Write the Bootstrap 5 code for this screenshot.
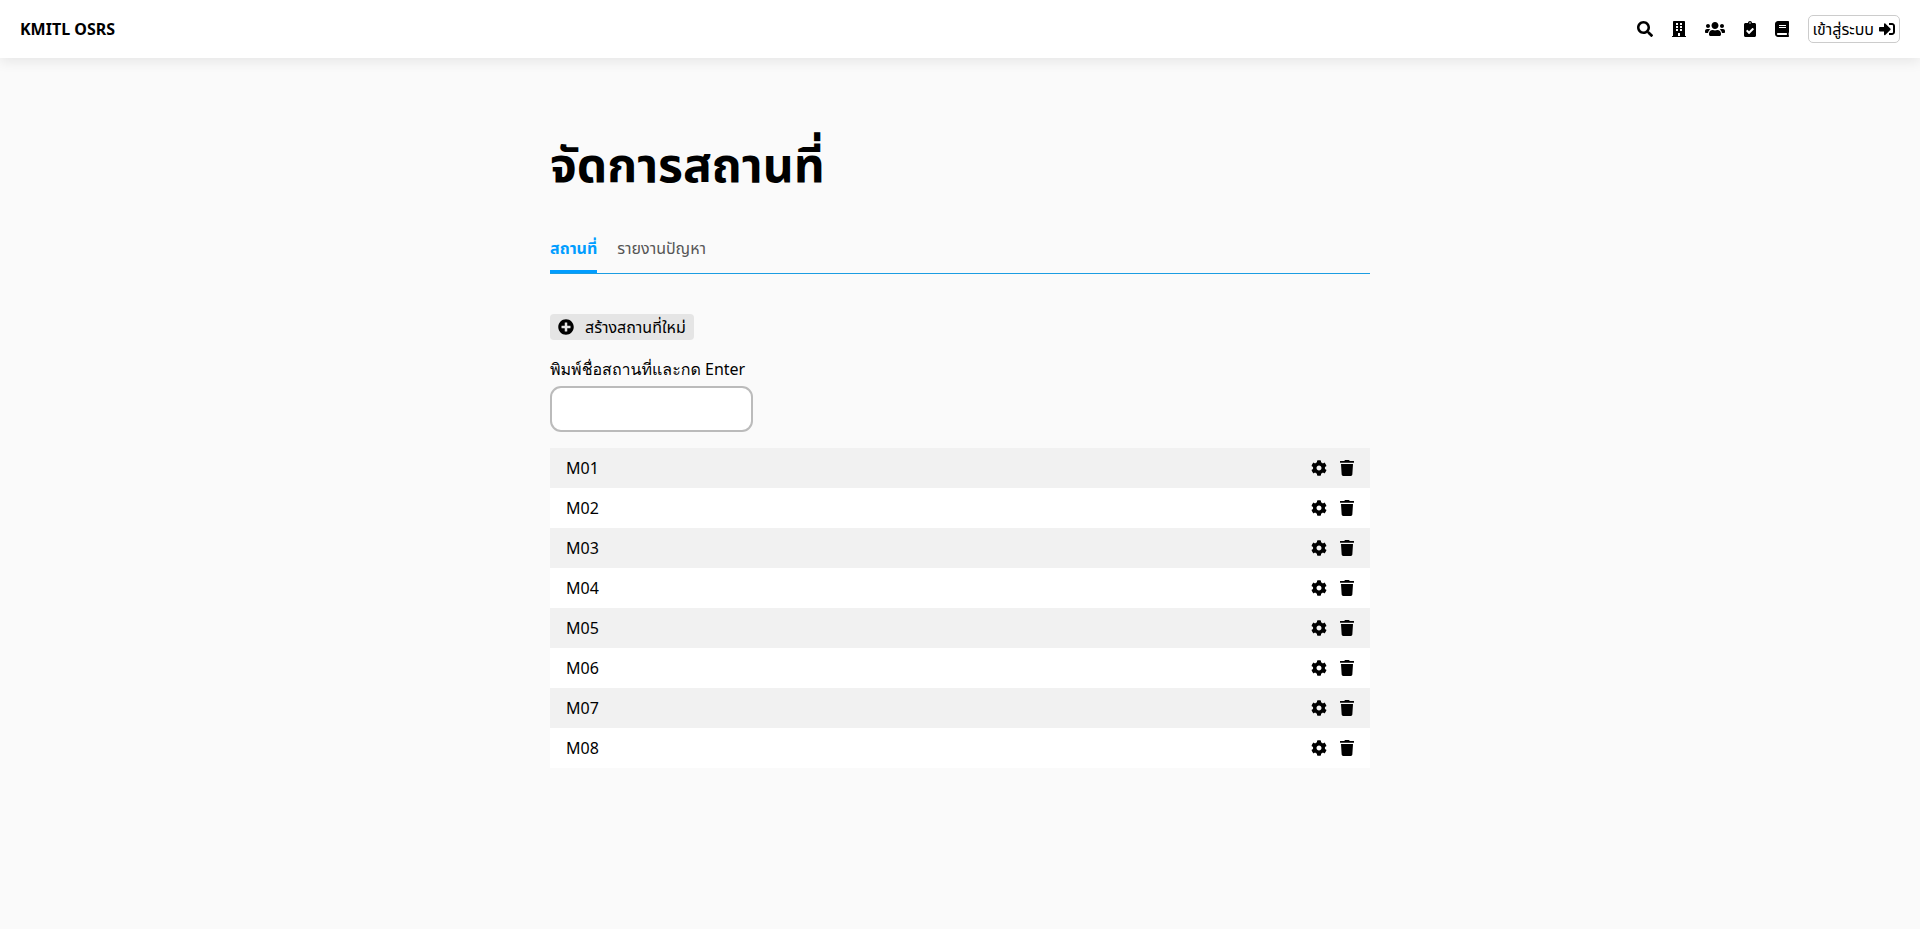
<!DOCTYPE html>
<html lang="th">
<head>
<meta charset="utf-8">
<meta name="viewport" content="width=device-width, initial-scale=1">
<title>KMITL OSRS</title>
<link href="https://cdn.jsdelivr.net/npm/bootstrap@5.3.0/dist/css/bootstrap.min.css" rel="stylesheet">
<style>
  body { background: #fafafa; color: #000; font-family: "Noto Sans", "Noto Sans Thai", "Noto Sans Thai UI", sans-serif; line-height: 24px; }
  .icon { height: 16px; fill: currentColor; display: block; }
  .site-bar { background: #fff; height: 58px; padding: 0 20px; box-shadow: 0 4px 12px rgba(0, 0, 0, .08); }
  .site-bar a { color: #000; }
  .icon-links { gap: 19px; }
  .login { height: 28px; padding: 0 4px; border: 1px solid #ccc; border-radius: 5px; background: #fff; gap: 5px; color: #000; }
  .page { max-width: 820px; padding-top: 70px; }
  .page-title { font-size: 48px; line-height: 72px; margin-bottom: 36px; }
  .tabs { border-bottom: 1px solid #1b9de2; gap: 20px; margin-bottom: 40px; }
  .tabs a { color: #555; padding-bottom: 10px; border-bottom: 3px solid transparent; }
  .tabs a.active { color: #009dff; font-weight: 700; border-bottom-color: #009dff; }
  .create { height: 26px; background: #e5e5e5; border: 0; border-radius: 4px; padding: 0 8px; gap: 11px; color: #000; }
  .place-label { font-family: "Noto Sans", Loma, sans-serif; margin: 17px 0 4px; }
  .thai { font-family: Loma, sans-serif; }
  .place-name { width: 203px; height: 46px; border: 2px solid #bbb; border-radius: 11px; background: #fff; padding: 0 12px; }
  .places li { height: 40px; padding: 0 16px; background: #fff; }
  .places li:nth-child(odd) { background: #f1f1f1; }
  .actions { gap: 13px; }
  .plain { border: 0; background: none; padding: 0; color: #000; }
</style>
</head>
<body>
<svg class="d-none" aria-hidden="true">
  <symbol id="i-gear" viewBox="0 0 512 512"><path d="M487.400 315.700l-42.600-24.600c4.300-23.200 4.300-47 0-70.200l42.600-24.600c4.900-2.800 7.100-8.600 5.500-14-11.100-35.600-30-67.800-54.700-94.600-3.800-4.100-10-5.100-14.800-2.300L380.800 110c-17.900-15.400-38.500-27.300-60.800-35.100V25.800c0-5.600-3.900-10.500-9.400-11.700-36.700-8.200-74.300-7.800-109.200 0-5.500 1.200-9.400 6.100-9.400 11.700V75c-22.200 7.900-42.800 19.800-60.800 35.100L88.700 85.500c-4.900-2.800-11-1.900-14.800 2.300-24.700 26.700-43.600 58.900-54.700 94.600-1.700 5.400.6 11.200 5.500 14L67.300 221c-4.300 23.200-4.300 47 0 70.200l-42.600 24.600c-4.900 2.800-7.100 8.600-5.500 14 11.100 35.600 30 67.800 54.700 94.600 3.800 4.100 10 5.100 14.800 2.300l42.600-24.600c17.900 15.400 38.500 27.300 60.800 35.100v49.200c0 5.600 3.900 10.500 9.400 11.700 36.700 8.200 74.300 7.800 109.200 0 5.500-1.200 9.400-6.100 9.400-11.700v-49.200c22.200-7.900 42.800-19.800 60.800-35.100l42.600 24.600c4.900 2.800 11 1.900 14.800-2.300 24.700-26.700 43.600-58.900 54.700-94.600 1.500-5.500-.7-11.300-5.600-14.100zM256 336c-44.100 0-80-35.900-80-80s35.900-80 80-80 80 35.900 80 80-35.900 80-80 80z"/></symbol>
  <symbol id="i-trash" viewBox="0 0 448 512"><path d="M432 32H312l-9.400-18.700A24 24 0 0 0 281.100 0H166.800a23.700 23.700 0 0 0-21.400 13.300L136 32H8a8 8 0 0 0-8 8v40a8 8 0 0 0 8 8h432a8 8 0 0 0 8-8V40a8 8 0 0 0-8-8zM32 128l21.200 339a48 48 0 0 0 47.900 45h245.800a48 48 0 0 0 47.900-45L416 128z"/></symbol>
</svg>

<nav class="site-bar d-flex align-items-center justify-content-between">
  <a class="fw-bold text-decoration-none" href="#">KMITL OSRS</a>
  <div class="icon-links d-flex align-items-center">
    <a href="#" aria-label="ค้นหา"><svg class="icon" viewBox="0 0 512 512" width="16"><path d="M505 442.700L405.300 343c-4.500-4.500-10.600-7-17-7H372c27.600-35.300 44-79.700 44-128C416 93.100 322.900 0 208 0S0 93.100 0 208s93.100 208 208 208c48.300 0 92.700-16.400 128-44v16.300c0 6.400 2.500 12.500 7 17l99.700 99.700c9.400 9.400 24.600 9.400 33.900 0l28.300-28.300c9.400-9.400 9.400-24.600.1-34zM208 336c-70.700 0-128-57.200-128-128 0-70.700 57.200-128 128-128 70.700 0 128 57.200 128 128 0 70.700-57.200 128-128 128z"/></svg></a>
    <a href="#" aria-label="สถานที่"><svg class="icon" viewBox="0 0 448 512" width="14"><path fill-rule="evenodd" d="M436 480h-20V24c0-13.300-10.700-24-24-24H56C42.700 0 32 10.700 32 24v456H12c-6.600 0-12 5.400-12 12v20h448v-20c0-6.600-5.400-12-12-12zM128 76c0-6.600 5.400-12 12-12h40c6.600 0 12 5.400 12 12v40c0 6.600-5.400 12-12 12h-40c-6.600 0-12-5.400-12-12V76zm0 96c0-6.600 5.400-12 12-12h40c6.600 0 12 5.400 12 12v40c0 6.600-5.400 12-12 12h-40c-6.600 0-12-5.400-12-12v-40zm52 148h-40c-6.600 0-12-5.400-12-12v-40c0-6.600 5.400-12 12-12h40c6.600 0 12 5.400 12 12v40c0 6.600-5.400 12-12 12zm76 160h-64v-84c0-6.600 5.400-12 12-12h40c6.600 0 12 5.400 12 12v84zm64-172c0 6.600-5.400 12-12 12h-40c-6.600 0-12-5.400-12-12v-40c0-6.600 5.400-12 12-12h40c6.600 0 12 5.400 12 12v40zm0-96c0 6.600-5.400 12-12 12h-40c-6.600 0-12-5.400-12-12v-40c0-6.600 5.400-12 12-12h40c6.600 0 12 5.400 12 12v40zm0-96c0 6.600-5.400 12-12 12h-40c-6.600 0-12-5.400-12-12V76c0-6.600 5.400-12 12-12h40c6.600 0 12 5.400 12 12v40z"/></svg></a>
    <a href="#" aria-label="ผู้ใช้"><svg class="icon" viewBox="0 0 640 512" width="20"><path d="M96 224c35.300 0 64-28.700 64-64s-28.700-64-64-64-64 28.700-64 64 28.700 64 64 64zm448 0c35.300 0 64-28.700 64-64s-28.700-64-64-64-64 28.700-64 64 28.700 64 64 64zm32 32h-64c-17.600 0-33.500 7.100-45.100 18.600 40.300 22.100 68.900 62 75.100 109.400h66c17.700 0 32-14.300 32-32v-32c0-35.300-28.700-64-64-64zm-256 0c61.900 0 112-50.100 112-112S381.900 32 320 32 208 82.100 208 144s50.100 112 112 112zm76.800 32h-8.300c-20.800 10-43.900 16-68.500 16s-47.600-6-68.500-16h-8.300C179.600 288 128 339.600 128 403.200V432c0 26.500 21.500 48 48 48h288c26.500 0 48-21.500 48-48v-28.800c0-63.600-51.600-115.200-115.200-115.200zm-223.700-13.400C161.500 263.100 145.600 256 128 256H64c-35.300 0-64 28.700-64 64v32c0 17.700 14.300 32 32 32h65.900c6.300-47.400 34.900-87.300 75.200-109.400z"/></svg></a>
    <a href="#" aria-label="งาน"><svg class="icon" viewBox="0 0 384 512" width="12"><path fill-rule="evenodd" d="M336 64h-80c0-35.300-28.700-64-64-64s-64 28.700-64 64H48C21.500 64 0 85.500 0 112v352c0 26.500 21.500 48 48 48h288c26.500 0 48-21.500 48-48V112c0-26.500-21.500-48-48-48zM192 40c13.300 0 24 10.700 24 24s-10.700 24-24 24-24-10.700-24-24 10.700-24 24-24zm121.200 231.800l-143 141.800c-4.700 4.700-12.300 4.600-17-.1l-82.600-83.300c-4.700-4.700-4.600-12.300.1-17L99.100 285c4.700-4.700 12.300-4.600 17 .1l46 46.400 106-105.200c4.700-4.700 12.300-4.600 17 .1l28.200 28.400c4.700 4.800 4.600 12.300-.1 17z"/></svg></a>
    <a href="#" aria-label="คู่มือ"><svg class="icon" viewBox="0 0 448 512" width="14"><path fill-rule="evenodd" d="M448 360V24c0-13.300-10.700-24-24-24H96C43 0 0 43 0 96v320c0 53 43 96 96 96h328c13.300 0 24-10.700 24-24v-16c0-7.500-3.500-14.300-8.900-18.700-4.200-15.400-4.200-59.300 0-74.700 5.400-4.300 8.900-11.100 8.900-18.600zM128 134c0-3.300 2.700-6 6-6h212c3.300 0 6 2.700 6 6v20c0 3.300-2.700 6-6 6H134c-3.300 0-6-2.700-6-6v-20zm0 64c0-3.300 2.700-6 6-6h212c3.300 0 6 2.700 6 6v20c0 3.300-2.700 6-6 6H134c-3.300 0-6-2.700-6-6v-20zm253.400 250H96c-17.700 0-32-14.300-32-32 0-17.600 14.400-32 32-32h285.400c-1.900 17.100-1.900 46.900 0 64z"/></svg></a>
    <button class="login d-flex align-items-center" type="button">เข้าสู่ระบบ
      <svg class="icon" viewBox="0 0 512 512" width="16"><path d="M416 448h-84c-6.600 0-12-5.400-12-12v-40c0-6.600 5.400-12 12-12h84c17.700 0 32-14.300 32-32V160c0-17.700-14.300-32-32-32h-84c-6.600 0-12-5.400-12-12V76c0-6.600 5.400-12 12-12h84c53 0 96 43 96 96v192c0 53-43 96-96 96zm-47-201L201 79c-15-15-41-4.500-41 17v96H24c-13.300 0-24 10.700-24 24v96c0 13.300 10.700 24 24 24h136v96c0 21.500 26 32 41 17l168-168c9.300-9.400 9.300-24.600 0-34z"/></svg></button>
  </div>
</nav>

<main class="page mx-auto">
  <h1 class="page-title fw-bold">จัดการสถานที่</h1>
  <nav class="tabs d-flex">
    <a class="active text-decoration-none" href="#">สถานที่</a>
    <a class="text-decoration-none" href="#">รายงานปัญหา</a>
  </nav>
  <button class="create d-flex align-items-center" type="button">
    <svg class="icon" viewBox="0 0 512 512" width="16"><path d="M256 8C119 8 8 119 8 256s111 248 248 248 248-111 248-248S393 8 256 8zm144 276c0 6.600-5.400 12-12 12h-92v92c0 6.600-5.400 12-12 12h-56c-6.600 0-12-5.400-12-12v-92h-92c-6.600 0-12-5.400-12-12v-56c0-6.600 5.400-12 12-12h92v-92c0-6.600 5.400-12 12-12h56c6.600 0 12 5.400 12 12v92h92c6.600 0 12 5.400 12 12v56z"/></svg>
    สร้างสถานที่ใหม่</button>
  <label class="place-label d-block" for="place"><span class="thai">พิมพ์ชื่อสถานที่และกด</span> Enter</label>
  <input class="place-name d-block" id="place" type="text">
  <ul class="places list-unstyled mt-3" id="list"></ul>
</main>
<script src="https://cdn.jsdelivr.net/npm/bootstrap@5.3.0/dist/js/bootstrap.bundle.min.js"></script>
<script>
  const list = document.getElementById('list');
  for (let n = 1; n <= 8; n++) {
    list.insertAdjacentHTML('beforeend', `<li class="d-flex align-items-center justify-content-between"><span>M0${n}</span><span class="actions d-flex"><button class="plain" type="button" aria-label="ตั้งค่า"><svg class="icon" viewBox="0 0 512 512" width="16"><use href="#i-gear"/></svg></button><button class="plain" type="button" aria-label="ลบ"><svg class="icon" viewBox="0 0 448 512" width="14"><use href="#i-trash"/></svg></button></span></li>`);
  }
</script>
</body>
</html>
